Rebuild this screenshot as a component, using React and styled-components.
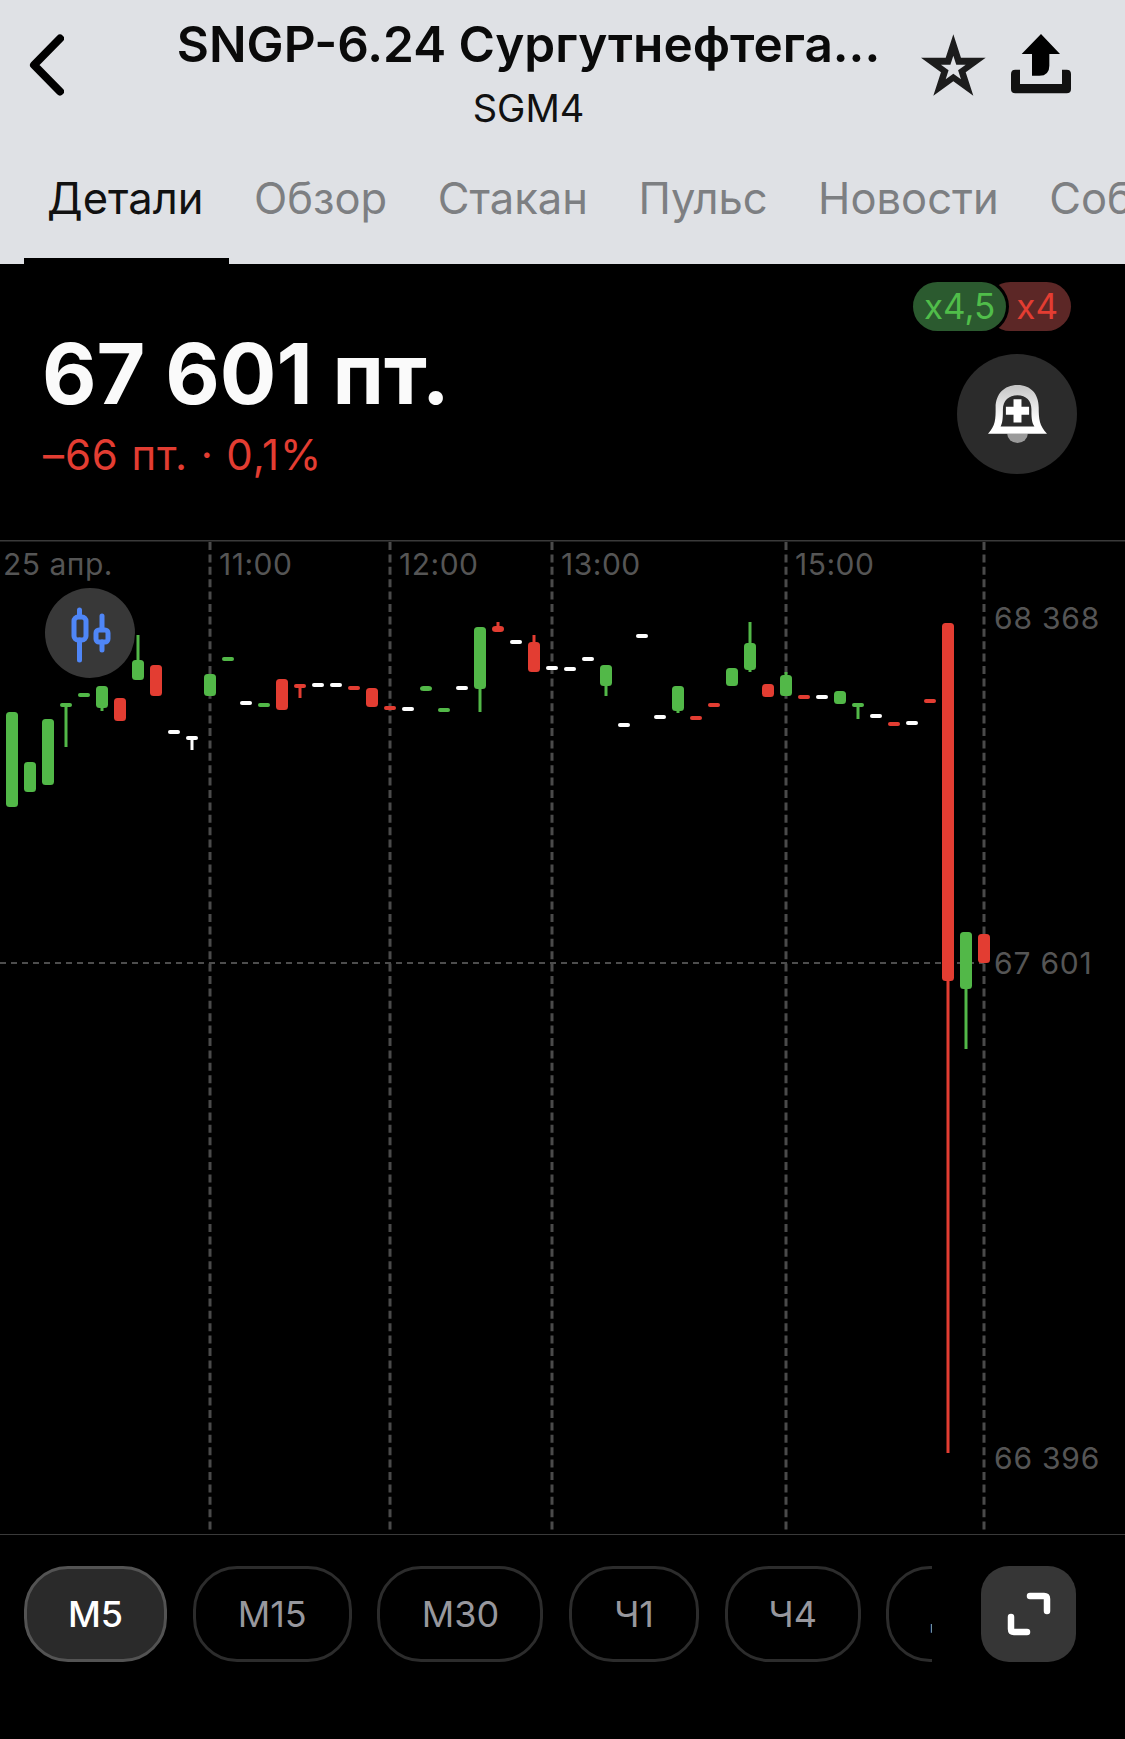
import React from "react"
import styled, { createGlobalStyle } from "styled-components"

const GREEN = "#52b848"
const RED = "#e33d32"
const WHITE = "#ffffff"

const GlobalStyle = createGlobalStyle`
  html, body {
    margin: 0;
    padding: 0;
    background: #000;
  }

  body {
    font-family: "Inter", "Noto Sans", sans-serif;
  }
`

const Page = styled.div`
  width: 1125px;
  height: 1739px;
  background: #000;
  overflow: hidden;
`

const Header = styled.header`
  height: 264px;
  background: #dfe1e5;
  box-sizing: border-box;
  overflow: hidden;
`

const TopRow = styled.div`
  display: flex;
  align-items: flex-start;
  height: 146px;
  padding: 0 54px 0 28px;
`

const BackIcon = styled.svg`
  width: 36px;
  height: 62px;
  margin-top: 34px;
  flex: none;
`

const TitleBlock = styled.div`
  flex: 1;
  margin-left: 72px;
  padding-top: 15px;
  text-align: center;
  min-width: 0;
`

const Title = styled.div`
  font-size: 49.5px;
  line-height: 58px;
  font-weight: 600;
  color: #0a0a0a;
  white-space: nowrap;
`

const Ticker = styled.div`
  margin-top: 12px;
  font-size: 38px;
  line-height: 46px;
  color: #111;
`

const Actions = styled.div`
  display: flex;
  gap: 25px;
  margin-top: 34px;
  flex: none;
`

const ActionIcon = styled.svg`
  width: ${(p) => p.$w}px;
  height: 62px;
`

const Tabs = styled.nav`
  display: flex;
  height: 118px;
  padding-left: 24px;
  overflow: hidden;
`

const Tab = styled.div`
  flex: none;
  box-sizing: border-box;
  height: 118px;
  padding: 26px 25.5px 0 ${(p) => (p.$active ? 23 : 25)}px;
  font-size: 43.5px;
  line-height: 52px;
  color: ${(p) => (p.$active ? "#111" : "#7d7f82")};
  border-bottom: 6px solid ${(p) => (p.$active ? "#000" : "transparent")};
`

const Summary = styled.section`
  display: flex;
  justify-content: space-between;
  height: 276px;
  box-sizing: border-box;
  padding: 18px 48px 0 42px;
`

const Quote = styled.div`
  padding-top: 42px;
`

const Price = styled.div`
  font-size: 84px;
  line-height: 100px;
  font-weight: 700;
  color: #fafafa;
`

const Change = styled.div`
  margin-top: 6px;
  margin-left: 1px;
  font-size: 42px;
  line-height: 50px;
  letter-spacing: 0.9px;
  color: ${RED};
`

const Side = styled.div`
  display: flex;
  flex-direction: column;
  align-items: flex-end;
  gap: 23px;
`

const Badges = styled.div`
  display: flex;
  margin-right: 6px;
`

const Badge = styled.span`
  height: 49px;
  border-radius: 25px;
  box-sizing: border-box;
  font-size: 35px;
  line-height: 49px;
`

const LongBadge = styled(Badge)`
  position: relative;
  z-index: 1;
  padding: 0 11px;
  background: #2b5a2f;
  color: #50bd4a;
  box-shadow: 0 0 0 3px #000;
`

const ShortBadge = styled(Badge)`
  padding: 0 13px 0 30px;
  margin-left: -20px;
  background: #5c2726;
  color: ${RED};
`

const BellButton = styled.div`
  display: flex;
  align-items: center;
  justify-content: center;
  width: 120px;
  height: 120px;
  border-radius: 50%;
  background: #2b2b2b;
`

const Chart = styled.section`
  position: relative;
  height: 995px;
`

const ChartSvg = styled.svg`
  display: block;
  width: 1125px;
  height: 995px;
`

const TimeLabel = styled.span`
  position: absolute;
  top: 9px;
  left: ${(p) => p.$x}px;
  font-size: 30px;
  line-height: 30px;
  letter-spacing: 0.5px;
  color: #555;
`

const PriceLabel = styled.span`
  position: absolute;
  left: 994px;
  top: ${(p) => p.$y}px;
  font-size: 30px;
  line-height: 30px;
  letter-spacing: 0.8px;
  color: #555;
`

const FilterButton = styled.div`
  position: absolute;
  left: 45px;
  top: 48px;
  width: 90px;
  height: 90px;
  border-radius: 50%;
  background: #383838;
`

const Bottom = styled.footer`
  display: flex;
  padding: 31px 49px 0 24px;
  gap: 49px;
`

const Periods = styled.div`
  display: flex;
  gap: 25.7px;
  width: 908px;
  overflow: hidden;
  flex: none;
`

const Period = styled.div`
  flex: none;
  box-sizing: border-box;
  display: flex;
  align-items: center;
  justify-content: center;
  width: ${(p) => p.$w}px;
  height: 96px;
  border-radius: 44px;
  border: 3px solid ${(p) => (p.$active ? "#535353" : "#2c2c2c")};
  background: ${(p) => (p.$active ? "#2a2a2a" : "transparent")};
  color: ${(p) => (p.$active ? "#fff" : "#97979d")};
  font-size: 36px;
  font-weight: ${(p) => (p.$active ? 500 : 400)};
`

const ExpandButton = styled.div`
  display: flex;
  align-items: center;
  justify-content: center;
  width: 95px;
  height: 96px;
  border-radius: 28px;
  background: #363636;
  flex: none;
`

// [colour, body top, body bottom, wick top, wick bottom], top === bottom is a flat dash
const candles = [
  [GREEN, 712, 807],
  [GREEN, 762, 792],
  [GREEN, 719, 785],
  [GREEN, 705, 705, 705, 747],
  [GREEN, 695, 695],
  [GREEN, 686, 708, 686, 711],
  [RED, 698, 721],
  [GREEN, 660, 680, 635, 680],
  [RED, 665, 696],
  [WHITE, 732, 732],
  [WHITE, 738, 738, 738, 750],
  [GREEN, 674, 696],
  [GREEN, 659, 659],
  [WHITE, 703, 703],
  [GREEN, 705, 705],
  [RED, 679, 710],
  [RED, 686, 686, 686, 698],
  [WHITE, 685, 685],
  [WHITE, 685, 685],
  [RED, 688, 688],
  [RED, 688, 707],
  [RED, 708, 708],
  [WHITE, 709, 709],
  [GREEN, 686, 691],
  [GREEN, 710, 710],
  [WHITE, 688, 688],
  [GREEN, 627, 689, 627, 712],
  [RED, 626, 632, 622, 632],
  [WHITE, 642, 642],
  [RED, 642, 672, 635, 672],
  [WHITE, 668, 668],
  [WHITE, 669, 669],
  [WHITE, 659, 659],
  [GREEN, 665, 686, 665, 696],
  [WHITE, 725, 725],
  [WHITE, 636, 636],
  [WHITE, 717, 717],
  [GREEN, 686, 711, 686, 713],
  [RED, 718, 718],
  [RED, 705, 705],
  [GREEN, 668, 686],
  [GREEN, 643, 670, 622, 672],
  [RED, 684, 697],
  [GREEN, 675, 696, 672, 696],
  [RED, 697, 697],
  [WHITE, 697, 697],
  [GREEN, 691, 704],
  [GREEN, 705, 705, 705, 719],
  [WHITE, 716, 716],
  [RED, 724, 724],
  [WHITE, 723, 723],
  [RED, 701, 701],
  [RED, 623, 981, 623, 1453],
  [GREEN, 932, 989, 932, 1049],
  [RED, 934, 963],
]

const gridX = [210, 390, 552, 786, 984]

const Candle = ({ index, color, top, bottom, wickTop, wickBottom }) => {
  const x = 12 + index * 18
  const flat = top === bottom
  return (
    <g fill={color}>
      {wickTop !== undefined && <rect x={x - 1.5} y={wickTop} width="3" height={wickBottom - wickTop} />}
      <rect x={x - 6} y={flat ? top - 2 : top} width="12" height={flat ? 4 : bottom - top} rx={flat ? 2 : 3.5} />
    </g>
  )
}

const starPoints = (cx, cy, outer, inner) => {
  const pts = []
  for (let i = 0; i < 10; i++) {
    const r = i % 2 ? inner : outer
    const a = (Math.PI / 5) * i
    pts.push(`${(cx + r * Math.sin(a)).toFixed(1)} ${(cy - r * Math.cos(a)).toFixed(1)}`)
  }
  return "M" + pts.join("L") + "Z"
}

const periods = [
  ["М5", 143, true],
  ["М15", 159],
  ["М30", 166],
  ["Ч1", 130],
  ["Ч4", 136],
  ["Д1", 130],
]

const App = () => {
  return (
    <Page>
      <GlobalStyle />
      <Header>
        <TopRow>
          <BackIcon viewBox="0 0 36 62">
            <path d="M32 4.5 L6 31 L32 57.5" fill="none" stroke="#000" strokeWidth="8" strokeLinecap="round" strokeLinejoin="round" />
          </BackIcon>
          <TitleBlock>
            <Title>SNGP-6.24 Сургутнефтега...</Title>
            <Ticker>SGM4</Ticker>
          </TitleBlock>
          <Actions>
            <ActionIcon $w={65} viewBox="64 42 195 186">
              <path
                d={starPoints(161, 145, 102, 39) + starPoints(161, 146, 39, 15)}
                fill="#1c1c1c"
                fillRule="evenodd"
              />
            </ActionIcon>
            <ActionIcon $w={60} viewBox="333 40 180 186">
              <path d="M423 40 L480 100 H448 V135 Q448 165 418 165 H396 V100 H365 Z" fill="#000" />
              <path
                d="M333 160 Q333 147 346 147 H360 V190 H486 V147 H500 Q513 147 513 160 V205 Q513 218 500 218 H346 Q333 218 333 205 Z"
                fill="#111"
              />
            </ActionIcon>
          </Actions>
        </TopRow>
        <Tabs>
          <Tab $active>Детали</Tab>
          <Tab>Обзор</Tab>
          <Tab>Стакан</Tab>
          <Tab>Пульс</Tab>
          <Tab>Новости</Tab>
          <Tab>События</Tab>
        </Tabs>
      </Header>

      <Summary>
        <Quote>
          <Price>67 601 пт.</Price>
          <Change>–66 пт. · 0,1%</Change>
        </Quote>
        <Side>
          <Badges>
            <LongBadge>x4,5</LongBadge>
            <ShortBadge>x4</ShortBadge>
          </Badges>
          <BellButton>
            <svg width="59" height="58" viewBox="262 347 178 175">
              <defs>
                <linearGradient id="bell" x1="0" y1="0" x2="0" y2="1">
                  <stop offset="0" stopColor="#c4c4c4" />
                  <stop offset="0.75" stopColor="#fff" />
                </linearGradient>
              </defs>
              <path d="M320 494 H382 A31 28 0 0 1 320 494 Z" fill="#9a9a9a" />
              <path
                d="M262 494 C285 470 285 450 285 415 C285 375 310 347 351 347 C392 347 415 375 415 415 C415 450 417 470 440 494 Z M300 472 H402 C393 460 393 440 393 420 C393 395 377 378 351 378 C325 378 307 395 307 420 C307 440 307 460 300 472 Z"
                fill="url(#bell)"
                fillRule="evenodd"
              />
              <path d="M339 390 H363 V413 H386 V437 H363 V460 H339 V437 H316 V413 H339 Z" fill="#fff" />
            </svg>
          </BellButton>
        </Side>
      </Summary>

      <Chart>
        <ChartSvg viewBox="0 540 1125 995">
          <line x1="0" x2="1125" y1="540.5" y2="540.5" stroke="#3a3a3a" strokeWidth="2" />
          <line x1="0" x2="1125" y1="1535" y2="1535" stroke="#3a3a3a" strokeWidth="2" />
          {gridX.map((x) => (
            <line key={x} x1={x} x2={x} y1="542" y2="1530" stroke="#4a4a4a" strokeWidth="3" strokeDasharray="8 4.4" />
          ))}
          <line x1="0" x2="984" y1="963" y2="963" stroke="#4d4d4d" strokeWidth="2" strokeDasharray="6 5" />
          {candles.map(([color, top, bottom, wickTop, wickBottom], i) => (
            <Candle key={i} index={i} color={color} top={top} bottom={bottom} wickTop={wickTop} wickBottom={wickBottom} />
          ))}
        </ChartSvg>
        <TimeLabel $x={3}>25 апр.</TimeLabel>
        <TimeLabel $x={219}>11:00</TimeLabel>
        <TimeLabel $x={399}>12:00</TimeLabel>
        <TimeLabel $x={561}>13:00</TimeLabel>
        <TimeLabel $x={795}>15:00</TimeLabel>
        <PriceLabel $y={63}>68 368</PriceLabel>
        <PriceLabel $y={408}>67 601</PriceLabel>
        <PriceLabel $y={903}>66 396</PriceLabel>
        <FilterButton>
          <svg width="90" height="90" viewBox="45 588 90 90">
            <g fill="none" stroke="#4f86f7" strokeWidth="5" strokeLinecap="round" strokeLinejoin="round">
              <path d="M79.5 610 V616 M79.5 640 V660" />
              <rect x="74" y="617" width="12" height="23" rx="4" />
              <path d="M102 616 V629 M102 642 V650" />
              <rect x="96" y="630" width="12" height="12" rx="3" />
            </g>
          </svg>
        </FilterButton>
      </Chart>

      <Bottom>
        <Periods>
          {periods.map(([label, width, active]) => (
            <Period key={label} $w={width} $active={active}>
              {label}
            </Period>
          ))}
        </Periods>
        <ExpandButton>
          <svg width="95" height="96" viewBox="0 0 95 96">
            <g fill="none" stroke="#fff" strokeWidth="6.5" strokeLinecap="round" strokeLinejoin="round">
              <path d="M49 30 H63 Q66 30 66 33 V45" />
              <path d="M30 51 V63 Q30 66 33 66 H46" />
            </g>
          </svg>
        </ExpandButton>
      </Bottom>
    </Page>
  )
}

export default App
